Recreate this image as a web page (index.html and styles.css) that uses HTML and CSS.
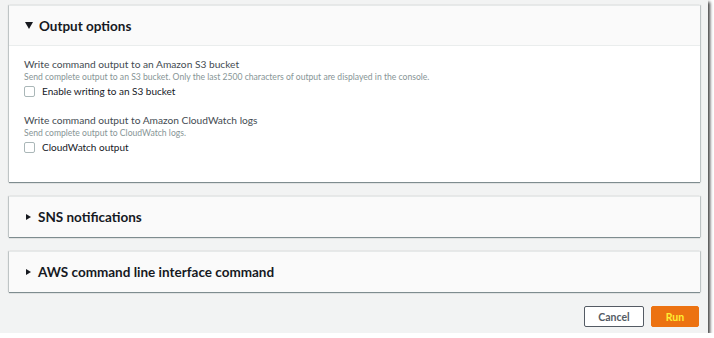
FILE: index.html
```html
<!DOCTYPE html>
<html lang="en">
<head>
    <meta charset="UTF-8">
    <title>Run command - output options</title>
    <link rel="stylesheet" href="styles.css">
</head>
<body>
    <div class="screen">
        <div class="panel">
            <div class="panel-header">
                <span class="caret caret-down"></span>
                <h2>Output options</h2>
            </div>
            <div class="panel-body">
                <div class="field">
                    <div class="field-label">Write command output to an Amazon S3 bucket</div>
                    <div class="field-hint">Send complete output to an S3 bucket. Only the last 2500 characters of output are displayed in the console.</div>
                    <label class="check"><span class="box"></span>Enable writing to an S3 bucket</label>
                </div>
                <div class="field">
                    <div class="field-label">Write command output to Amazon CloudWatch logs</div>
                    <div class="field-hint">Send complete output to CloudWatch logs.</div>
                    <label class="check"><span class="box"></span>CloudWatch output</label>
                </div>
            </div>
        </div>

        <div class="panel collapsed">
            <div class="panel-header">
                <span class="caret caret-right"></span>
                <h2>SNS notifications</h2>
            </div>
        </div>

        <div class="panel collapsed">
            <div class="panel-header">
                <span class="caret caret-right"></span>
                <h2>AWS command line interface command</h2>
            </div>
        </div>

        <div class="actions">
            <button class="btn btn-cancel">Cancel</button>
            <button class="btn btn-run">Run</button>
        </div>
    </div>
</body>
</html>
```

FILE: styles.css
```css
body {
    margin: 0;
    background: #ffffff;
    font-family: 'Lato', sans-serif;
    color: #16191f;
}
.screen {
    width: 708px;
    height: 333px;
    box-sizing: border-box;
    padding: 5px 8px 0 9px;
    background: #f2f3f3;
    box-shadow: 2px 2px 3px rgba(0, 0, 0, 0.75);
}
.panel {
    background: #ffffff;
    border-top: 1px solid #e6e9e9;
    box-shadow: 0 1px 1px 0 rgba(0, 28, 36, 0.45), 1px 0 1px 0 rgba(0, 28, 36, 0.15), -1px 0 1px 0 rgba(0, 28, 36, 0.15);
    margin-bottom: 14px;
}
.panel-header {
    height: 39px;
    display: flex;
    align-items: center;
    padding-left: 16px;
    background: #fafafa;
    border-bottom: 1px solid #eaeded;
}
.collapsed .panel-header {
    height: 40px;
    border-bottom: none;
}
.panel-header h2 {
    margin: 0;
    font-size: 13.5px;
    font-weight: 700;
    color: #16191f;
}
.caret {
    width: 0;
    height: 0;
    margin-right: 6px;
}
.caret-down {
    border-left: 4px solid transparent;
    border-right: 4px solid transparent;
    border-top: 7px solid #16191f;
}
.caret-right {
    border-top: 3.5px solid transparent;
    border-bottom: 3.5px solid transparent;
    border-left: 5px solid #16191f;
    margin-left: 1px;
    margin-right: 7px;
}
.panel-body {
    height: 136px;
    box-sizing: border-box;
    padding: 11px 14px 0 15px;
}
.field {
    margin-bottom: 15px;
}
.field-label {
    font-size: 10.2px;
    line-height: 15px;
    color: #444b52;
}
.field-hint {
    font-size: 8.6px;
    line-height: 11px;
    color: #879596;
}
.check {
    display: flex;
    align-items: center;
    margin-top: 1px;
    font-size: 10px;
    line-height: 14px;
    color: #16191f;
}
.box {
    width: 9px;
    height: 9px;
    border: 1px solid #aab7b8;
    border-radius: 2px;
    background: #ffffff;
    margin-right: 7px;
}
.actions {
    display: flex;
    justify-content: flex-end;
    gap: 7px;
    margin-top: 14px;
    padding-right: 1px;
}
.btn {
    height: 21px;
    font-family: 'Lato', sans-serif;
    font-size: 10.5px;
    font-weight: 700;
    border-radius: 2px;
    padding: 0;
}
.btn-cancel {
    width: 60px;
    background: #ffffff;
    border: 1px solid #545b64;
    color: #545b64;
}
.btn-run {
    width: 48px;
    background: #ec7211;
    border: 1px solid #ec7211;
    color: #ffee33;
}
```
